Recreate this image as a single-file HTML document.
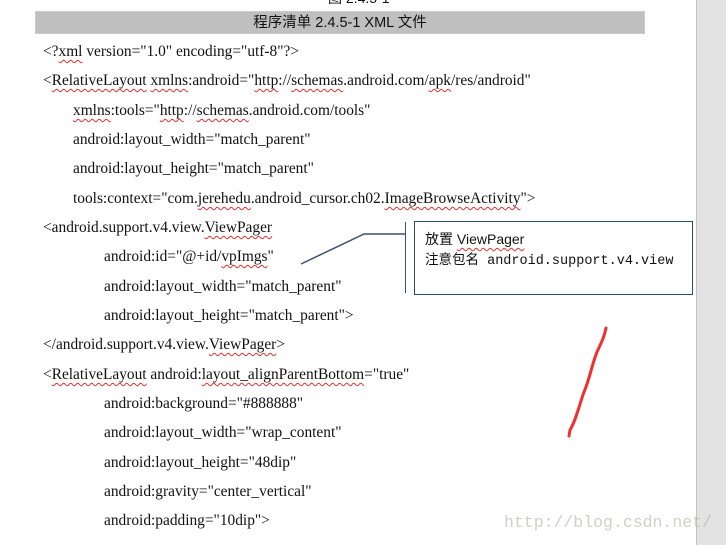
<!DOCTYPE html>
<html><head><meta charset="utf-8"><style>
body{margin:0;width:726px;height:545px;overflow:hidden;background:#fff;position:relative;font-family:"Liberation Serif",serif;}
.l{position:absolute;font-size:15.4px;color:#111;white-space:nowrap;line-height:18px;}
.w{text-decoration:underline wavy #e03030;text-decoration-thickness:1px;text-underline-offset:3px;}
</style></head><body>
<div style="position:absolute;left:696px;top:0;width:30px;height:545px;background:#e3e3e3;border-left:1px solid #c4c4c4"></div>
<div class="l" style="left:328px;top:-11px;font-family:'Liberation Sans','Noto Sans CJK SC',sans-serif;font-size:14px">图 2.4.5-1</div>
<div style="position:absolute;left:35px;top:11px;width:610px;height:23px;background:#bfbfbf;border:1px dotted #d8d8d8;box-sizing:border-box;text-align:center;font:14.5px/22px 'Liberation Sans','Noto Sans CJK SC',sans-serif;color:#111">程序清单 2.4.5-1 XML 文件</div>
<div class="l" style="left:43px;top:43px">&lt;?<span class="w">xml</span> version="1.0" encoding="utf-8"?&gt;</div>
<div class="l" style="left:43px;top:72px">&lt;<span class="w">RelativeLayout</span> <span class="w">xmlns</span>:android="<span class="w">http</span>://<span class="w">schemas</span>.android.com/<span class="w">apk</span>/res/android"</div>
<div class="l" style="left:73px;top:102px"><span class="w">xmlns</span>:tools="<span class="w">http</span>://<span class="w">schemas</span>.android.com/tools"</div>
<div class="l" style="left:73px;top:131px">android:layout_width="match_parent"</div>
<div class="l" style="left:73px;top:160px">android:layout_height="match_parent"</div>
<div class="l" style="left:73px;top:190px">tools:context="com.<span class="w">jerehedu</span>.android_cursor.ch02.<span class="w">ImageBrowseActivity</span>"&gt;</div>
<div class="l" style="left:43px;top:219px">&lt;android.support.v4.view.<span class="w">ViewPager</span></div>
<div class="l" style="left:104px;top:248px">android:id="@+id/<span class="w">vpImgs</span>"</div>
<div class="l" style="left:104px;top:278px">android:layout_width="match_parent"</div>
<div class="l" style="left:104px;top:307px">android:layout_height="match_parent"&gt;</div>
<div class="l" style="left:43px;top:336px">&lt;/android.support.v4.view.<span class="w">ViewPager</span>&gt;</div>
<div class="l" style="left:43px;top:366px">&lt;<span class="w">RelativeLayout</span> android:<span class="w">layout_alignParentBottom</span>="true"</div>
<div class="l" style="left:104px;top:395px">android:background="#888888"</div>
<div class="l" style="left:104px;top:424px">android:layout_width="wrap_content"</div>
<div class="l" style="left:104px;top:454px">android:layout_height="48dip"</div>
<div class="l" style="left:104px;top:483px">android:gravity="center_vertical"</div>
<div class="l" style="left:104px;top:512px">android:padding="10dip"&gt;</div>
<svg style="position:absolute;left:0;top:0" width="726" height="545">
<polyline points="301,264 364,234 405,234" fill="none" stroke="#3a5070" stroke-width="1.5"/>
<line x1="405.5" y1="222" x2="405.5" y2="293" stroke="#3a5070" stroke-width="1"/>
<rect x="414.5" y="221.5" width="278" height="73" fill="#fff" stroke="#2e4a6b" stroke-width="1"/>
<path d="M606,328 C604,338 601,343 597,352 C592,364 590,378 584,392 C579,406 576,420 570,430 L569,436" fill="none" stroke="#f03030" stroke-width="3" stroke-linecap="round"/>
</svg>
<div class="l" style="left:425px;top:230px;font-family:'Liberation Sans','Noto Sans CJK SC',sans-serif;font-size:14px">放置 <span class="w">ViewPager</span></div>
<div class="l" style="left:425px;top:253px;font-family:'Liberation Mono','Noto Sans CJK SC',monospace;font-size:13.5px">注意包名 android.support.v4.view</div>
<div class="l" style="left:504px;top:514px;font-family:'Liberation Mono',monospace;font-size:16.5px;color:rgba(180,175,165,0.6)">http://blog.csdn.net/</div>
</body></html>
